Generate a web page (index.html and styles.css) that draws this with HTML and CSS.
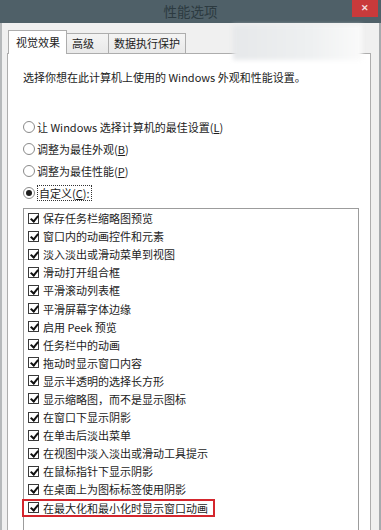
FILE: index.html
```html
<!DOCTYPE html>
<html lang="zh-CN">
<head>
  <meta charset="UTF-8">
  <meta name="viewport" content="width=device-width, initial-scale=1.0">
  <title>性能选项</title>
  <link rel="stylesheet" href="styles.css">
</head>
<body>
  <div class="janela">
    <div class="titulo">
      <span></span>
      <h1>性能选项</h1>
      <button class="fechar">✕</button>
    </div>

    <div class="corpo">
      <div class="abas">
        <div class="aba ativa">视觉效果</div>
        <div class="aba">高级</div>
        <div class="aba">数据执行保护</div>
      </div>

      <div class="painel">
        <p class="descricao">选择你想在此计算机上使用的 Windows 外观和性能设置。</p>

        <div class="opcoes">
          <div class="opcao"><span class="radio"></span><span>让 Windows 选择计算机的最佳设置(<u>L</u>)</span></div>
          <div class="opcao"><span class="radio"></span><span>调整为最佳外观(<u>B</u>)</span></div>
          <div class="opcao"><span class="radio"></span><span>调整为最佳性能(<u>P</u>)</span></div>
          <div class="opcao"><span class="radio marcado"></span><span class="foco">自定义(<u>C</u>):</span></div>
        </div>

        <div class="lista">
          <div class="item"><span class="check"></span>保存任务栏缩略图预览</div>
          <div class="item"><span class="check"></span>窗口内的动画控件和元素</div>
          <div class="item"><span class="check"></span>淡入淡出或滑动菜单到视图</div>
          <div class="item"><span class="check"></span>滑动打开组合框</div>
          <div class="item"><span class="check"></span>平滑滚动列表框</div>
          <div class="item"><span class="check"></span>平滑屏幕字体边缘</div>
          <div class="item"><span class="check"></span>启用 Peek 预览</div>
          <div class="item"><span class="check"></span>任务栏中的动画</div>
          <div class="item"><span class="check"></span>拖动时显示窗口内容</div>
          <div class="item"><span class="check"></span>显示半透明的选择长方形</div>
          <div class="item"><span class="check"></span>显示缩略图，而不是显示图标</div>
          <div class="item"><span class="check"></span>在窗口下显示阴影</div>
          <div class="item"><span class="check"></span>在单击后淡出菜单</div>
          <div class="item"><span class="check"></span>在视图中淡入淡出或滑动工具提示</div>
          <div class="item"><span class="check"></span>在鼠标指针下显示阴影</div>
          <div class="item"><span class="check"></span>在桌面上为图标标签使用阴影</div>
          <div class="item destaque"><span class="check"></span>在最大化和最小化时显示窗口动画</div>
        </div>
      </div>
    </div>

    <!-- mancha borrada da captura original -->
    <div class="borrao"></div>
  </div>
</body>
</html>
```

FILE: styles.css
```css
body {
  margin: 0;
  font-family: "Noto Sans CJK SC", "Noto Sans", sans-serif;
  font-size: 11px;
  color: #1c1c1c;
  background: #f0f0f0;
}
.janela {
  position: relative;
  width: 381px;
  height: 530px;
  display: flex;
  flex-direction: column;
  overflow: hidden;
}
.titulo {
  height: 23px;
  flex: none;
  background: #4f6068;
  display: grid;
  grid-template-columns: 1fr auto 1fr;
}
.titulo h1 {
  margin: 0;
  font-size: 13.5px;
  font-weight: normal;
  line-height: 23px;
  color: #2c3a40;
}
.fechar {
  justify-self: end;
  width: 26px;
  height: 17px;
  margin-right: 3px;
  border: none;
  padding: 0;
  background: #c93a3b;
  color: #f4dede;
  font-size: 9px;
  font-weight: bold;
  line-height: 17px;
}
.corpo {
  flex: 1;
  display: flex;
  flex-direction: column;
  background: #f0f0f0;
  border-left: 2px solid #b6b9bb;
  border-right: 2px solid #a6aaad;
}
.abas {
  display: flex;
  align-items: flex-end;
  height: 22px;
  margin-top: 8px;
  padding-left: 6px;
}
.aba {
  height: 19px;
  line-height: 19px;
  padding: 0 5px;
  border: 1px solid #adadad;
  border-bottom: none;
  border-left: none;
  background: linear-gradient(#f4f4f4, #e9e9e9);
}
.aba:nth-child(2) {
  width: 31px;
}
.aba.ativa {
  position: relative;
  z-index: 1;
  height: 23px;
  line-height: 22px;
  width: 45px;
  padding: 0 5px 0 7px;
  margin-bottom: -1px;
  border-left: 1px solid #adadad;
  background: #fff;
}
.painel {
  flex: 1;
  margin: 0 8px 0 5px;
  padding: 15px 11px 0 15px;
  background: #fff;
  border: 1px solid #adadad;
  border-bottom: none;
  display: flex;
  flex-direction: column;
}
.descricao {
  margin: 0;
  line-height: 16px;
}
.opcoes {
  margin-top: 31px;
  display: flex;
  flex-direction: column;
}
.opcao {
  height: 22px;
  display: flex;
  align-items: center;
  gap: 2px;
}
.radio {
  width: 10px;
  height: 10px;
  border: 1px solid #8a8a8a;
  border-radius: 50%;
  background: #fff;
  display: flex;
  align-items: center;
  justify-content: center;
}
.radio.marcado::after {
  content: "";
  width: 6px;
  height: 6px;
  border-radius: 50%;
  background: #1e1e1e;
}
.foco {
  line-height: 14px;
  padding: 0 1px;
  border: 1px dotted #333;
}
.lista {
  flex: 1;
  margin-top: 4px;
  border: 1px solid #9c9c9c;
  border-bottom: none;
}
.item {
  height: 18.1px;
  box-sizing: border-box;
  display: flex;
  align-items: center;
  gap: 4px;
  padding-left: 4px;
}
.check {
  position: relative;
  width: 11px;
  height: 11px;
  border: 1px solid #3a3a3a;
  background: #fff;
  box-sizing: border-box;
  flex: none;
}
.check::after {
  content: "";
  position: absolute;
  left: 3px;
  top: 0px;
  width: 3px;
  height: 6px;
  border: solid #111;
  border-width: 0 2px 2px 0;
  transform: rotate(40deg);
}
.item.destaque {
  width: fit-content;
  margin-left: -2px;
  padding: 0 5px 0 4px;
  border: 2px solid #d4262d;
}
.borrao {
  position: absolute;
  left: 233px;
  top: 25px;
  width: 129px;
  height: 35px;
  background: linear-gradient(90deg, #e6e8ea, #eef0f1 60%, #fafafa);
  filter: blur(2px);
}
```
